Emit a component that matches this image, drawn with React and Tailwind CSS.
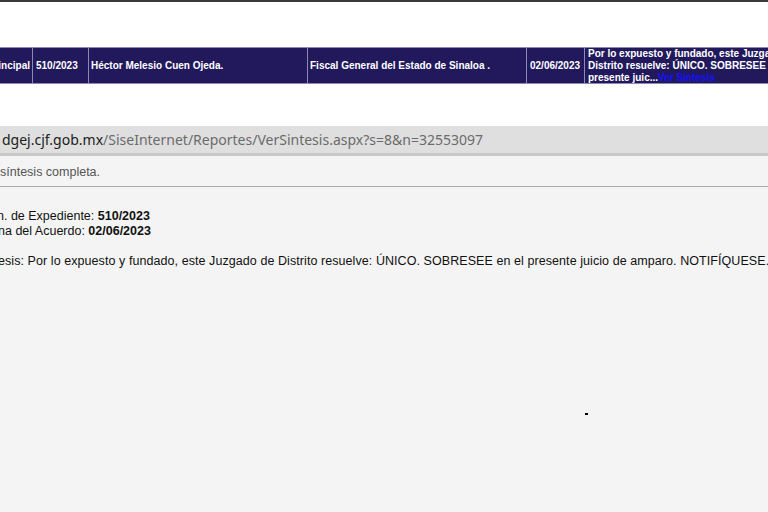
import React from 'react';

const cell = 'border-l border-[#8e89b4] px-[3px] align-middle';

export default function App() {
  return (
    <div className="w-[768px] h-[512px] overflow-hidden bg-white font-['Liberation_Sans',Arial,sans-serif] relative">
      {/* top edge */}
      <div className="h-[2px] bg-[#3a3a3a]" />

      {/* results row */}
      <div className="mt-[45px] h-[37px] bg-[#22195d] border-y border-[#8e89b4] flex text-white text-[10px] font-bold leading-[12px] overflow-hidden">
        <div className="w-[32px] shrink-0 flex items-center justify-end pr-[2px] overflow-hidden whitespace-nowrap">
          Principal
        </div>
        <div className={`${cell} w-[56px] shrink-0 flex items-center`}>510/2023</div>
        <div className={`${cell} w-[219px] shrink-0 flex items-center pl-[2px]`}>Héctor Melesio Cuen Ojeda.</div>
        <div className={`${cell} w-[219px] shrink-0 flex items-center pl-[2px]`}>Fiscal General del Estado de Sinaloa .</div>
        <div className={`${cell} w-[58px] shrink-0 flex items-center`}>02/06/2023</div>
        <div className={`${cell} w-[250px] shrink-0 flex items-center`}>
          <p>
            Por lo expuesto y fundado, este Juzgado de Distrito resuelve: ÚNICO. SOBRESEE en el presente juic...
            <span className="text-[#1212ff]">Ver Síntesis</span>
          </p>
        </div>
      </div>

      {/* browser window */}
      <div className="mt-[42px] bg-[#f4f4f4] h-[400px]">
        <div className="h-[27px] bg-[#dfdfdf] border-b-[3px] border-[#c9c9c9] box-content flex items-center pl-[2px] font-['Noto_Sans',sans-serif] text-[14px] whitespace-nowrap">
          <span className="text-[#202020]">dgej.cjf.gob.mx</span>
          <span className="text-[#6b6b6b]">/SiseInternet/Reportes/VerSintesis.aspx?s=8&amp;n=32553097</span>
        </div>

        <div className="h-[31px] pt-[2px] border-b border-[#a9a9a9] flex items-center text-[12.5px] text-[#555] whitespace-nowrap">
          síntesis completa.
        </div>

        <div className="pt-[22px] text-[12.5px] leading-[15px] text-[#111] whitespace-nowrap">
          <p className="ml-[-3px]">n. de Expediente: <b>510/2023</b></p>
          <p className="ml-[-2px]">na del Acuerdo: <b>02/06/2023</b></p>
          <p className="mt-[15px] ml-[-2px] tracking-[0.07px]">esis: Por lo expuesto y fundado, este Juzgado de Distrito resuelve: ÚNICO. SOBRESEE en el presente juicio de amparo. NOTIFÍQUESE.</p>
        </div>
      </div>

      {/* stray cursor mark */}
      <div className="absolute left-[585px] top-[413px] w-[3px] h-[2px] bg-black" />
    </div>
  );
}
